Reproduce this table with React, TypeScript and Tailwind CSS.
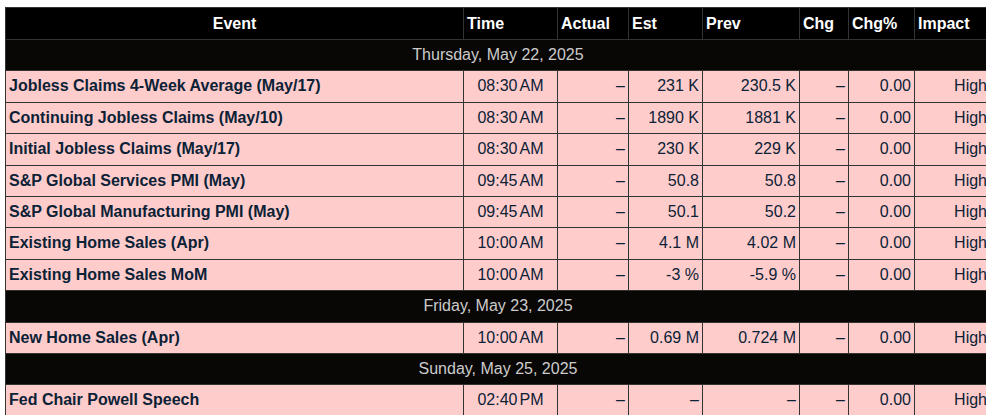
import React from "react";

type TEvent = {
  name: string;
  time: string;
  period: string;
  actual: string;
  est: string;
  prev: string;
  chg: string;
  chgPct: string;
  impact: string;
};

type TDay = {
  date: string;
  events: TEvent[];
};

const days: TDay[] = [
  {
    date: "Thursday, May 22, 2025",
    events: [
      { name: "Jobless Claims 4-Week Average (May/17)", time: "08:30", period: "AM", actual: "–", est: "231 K", prev: "230.5 K", chg: "–", chgPct: "0.00", impact: "High" },
      { name: "Continuing Jobless Claims (May/10)", time: "08:30", period: "AM", actual: "–", est: "1890 K", prev: "1881 K", chg: "–", chgPct: "0.00", impact: "High" },
      { name: "Initial Jobless Claims (May/17)", time: "08:30", period: "AM", actual: "–", est: "230 K", prev: "229 K", chg: "–", chgPct: "0.00", impact: "High" },
      { name: "S&P Global Services PMI (May)", time: "09:45", period: "AM", actual: "–", est: "50.8", prev: "50.8", chg: "–", chgPct: "0.00", impact: "High" },
      { name: "S&P Global Manufacturing PMI (May)", time: "09:45", period: "AM", actual: "–", est: "50.1", prev: "50.2", chg: "–", chgPct: "0.00", impact: "High" },
      { name: "Existing Home Sales (Apr)", time: "10:00", period: "AM", actual: "–", est: "4.1 M", prev: "4.02 M", chg: "–", chgPct: "0.00", impact: "High" },
      { name: "Existing Home Sales MoM", time: "10:00", period: "AM", actual: "–", est: "-3 %", prev: "-5.9 %", chg: "–", chgPct: "0.00", impact: "High" },
    ],
  },
  {
    date: "Friday, May 23, 2025",
    events: [
      { name: "New Home Sales (Apr)", time: "10:00", period: "AM", actual: "–", est: "0.69 M", prev: "0.724 M", chg: "–", chgPct: "0.00", impact: "High" },
    ],
  },
  {
    date: "Sunday, May 25, 2025",
    events: [
      { name: "Fed Chair Powell Speech", time: "02:40", period: "PM", actual: "–", est: "–", prev: "–", chg: "–", chgPct: "0.00", impact: "High" },
    ],
  },
];

const thClass = "border border-[#333] px-[3px] py-[6.5px] leading-[normal] font-bold text-white";
const tdClass = "border border-[#333] px-[3px] py-1.5 text-right";

function App() {
  return (
    <div
      className="w-[986px] h-[415px] overflow-hidden bg-white pt-[7px] pl-[5px]"
      style={{ fontFamily: '"Liberation Sans", Arial, sans-serif' }}>
      <table className="table-fixed border-collapse w-[985px] text-base leading-[18.4px] text-[#0b2236]">
        <colgroup>
          <col className="w-[458px]" />
          <col className="w-[94px]" />
          <col className="w-[71px]" />
          <col className="w-[74px]" />
          <col className="w-[97px]" />
          <col className="w-[49px]" />
          <col className="w-[66px]" />
          <col className="w-[76px]" />
        </colgroup>
        <thead>
          <tr className="bg-black">
            <th className={`${thClass} text-center`}>Event</th>
            <th className={`${thClass} text-left`}>Time</th>
            <th className={`${thClass} text-left`}>Actual</th>
            <th className={`${thClass} text-left`}>Est</th>
            <th className={`${thClass} text-left`}>Prev</th>
            <th className={`${thClass} text-left`}>Chg</th>
            <th className={`${thClass} text-left`}>Chg%</th>
            <th className={`${thClass} text-left`}>Impact</th>
          </tr>
        </thead>
        <tbody>
          {days.map((day) => (
            <React.Fragment key={day.date}>
              <tr className="bg-[#080706]">
                <td
                  colSpan={8}
                  className="border border-[#333] px-[3px] py-1.5 text-center text-[#cccccc]">
                  {day.date}
                </td>
              </tr>
              {day.events.map((ev) => (
                <tr key={ev.name} className="bg-[#ffcccc]">
                  <td className="border border-[#333] px-[3px] py-1.5 text-left font-bold whitespace-nowrap">
                    {ev.name}
                  </td>
                  <td className="border border-[#333] px-[3px] py-1.5 text-center whitespace-nowrap">
                    {ev.time}
                    <span className="ml-[2px]">{ev.period}</span>
                  </td>
                  <td className={tdClass}>{ev.actual}</td>
                  <td className={tdClass}>{ev.est}</td>
                  <td className={tdClass}>{ev.prev}</td>
                  <td className={tdClass}>{ev.chg}</td>
                  <td className={tdClass}>{ev.chgPct}</td>
                  <td className={tdClass}>{ev.impact}</td>
                </tr>
              ))}
            </React.Fragment>
          ))}
        </tbody>
      </table>
    </div>
  );
}

export default App;
